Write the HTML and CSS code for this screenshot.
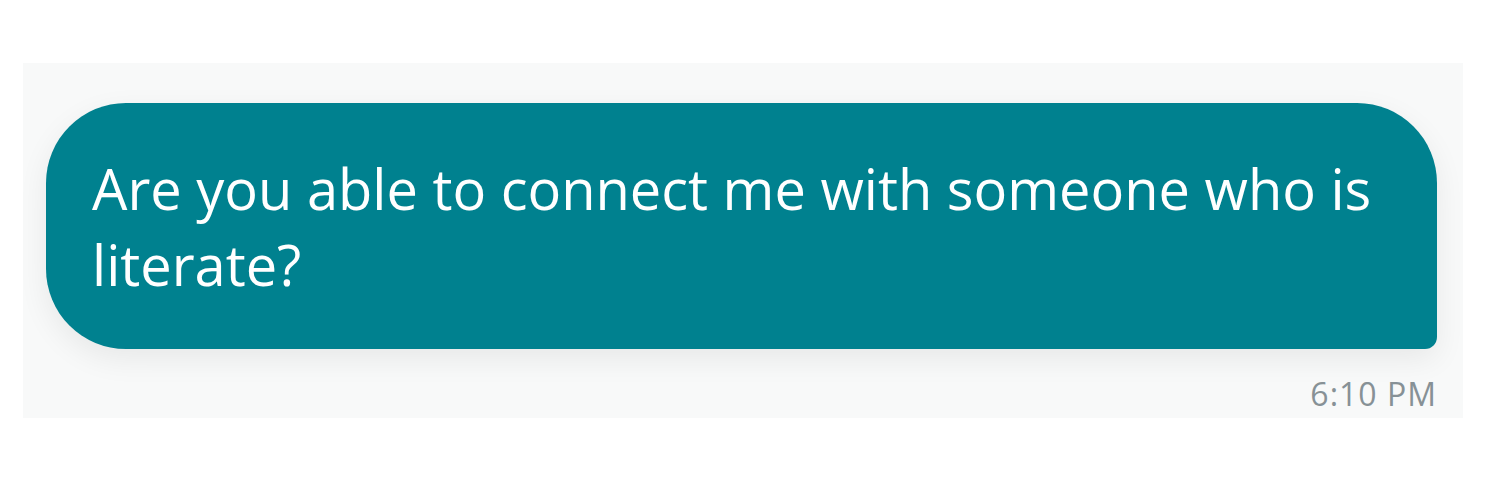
FILE: index.html
```html
<!DOCTYPE html>
<html lang="en">
<head>
  <meta charset="UTF-8">
  <title>Chat Message</title>
  <link rel="stylesheet" href="styles.css">
</head>
<body>
  <div class="chat-panel">
    <div class="message message-outgoing">
      <div class="bubble">Are you able to connect me with someone who is literate?</div>
      <div class="timestamp">6:10 PM</div>
    </div>
  </div>
</body>
</html>
```

FILE: styles.css
```css
/* Reset */
* {
  margin: 0;
  padding: 0;
  box-sizing: border-box;
}
body {
  font-family: "Open Sans", "Noto Sans", Arial, sans-serif;
  background: #fff;
  padding: 63px 37px 0 23px;
}

/* Panel */
.chat-panel {
  background: #f8f9f9;
  height: 355px;
  padding: 40px 26px 0 23px;
}

/* Message */
.message {
  display: flex;
  flex-direction: column;
}
.bubble {
  background: #00818f;
  color: #fff;
  font-size: 56px;
  font-weight: 500;
  line-height: 76px;
  padding: 47px 46px 47px 46px;
  border-radius: 80px 80px 12px 80px;
  box-shadow: 0 10px 30px rgba(0, 0, 0, 0.07);
}
.timestamp {
  align-self: flex-end;
  margin-top: 23px;
  font-size: 32px;
  letter-spacing: 1px;
  color: #879196;
}
```
